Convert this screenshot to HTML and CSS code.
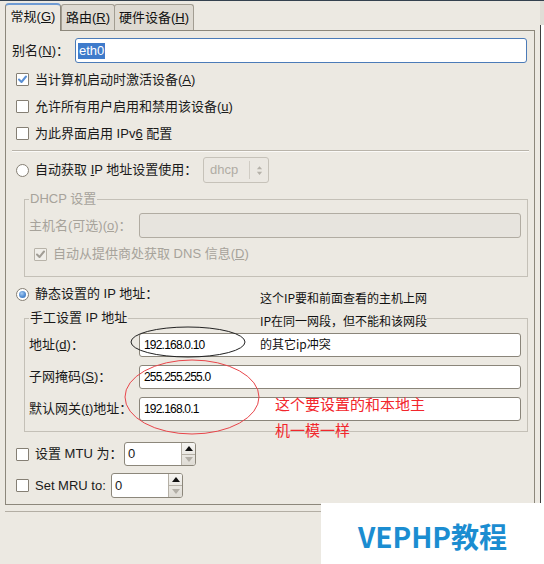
FILE: index.html
```html
<!DOCTYPE html>
<html lang="zh-CN">
<head>
<meta charset="utf-8">
<title>网络设置</title>
<link rel="stylesheet" href="styles.css">
</head>
<body>
<div class="topline"></div>
<div class="win">
  <div class="main">
    <div class="tabs">
      <div class="tab active">常规(<u>G</u>)</div>
      <div class="tab">路由(<u>R</u>)</div>
      <div class="tab last">硬件设备(<u>H</u>)</div>
    </div>
    <div class="frame">
      <div class="alias">
        <span class="alias-lbl">别名(<u>N</u>)：</span>
        <div class="entry focus"><span class="sel">eth0</span></div>
      </div>
      <div class="checks">
        <div class="crow"><span class="cb on"><svg viewBox="0 0 11 11"><path d="M2 5.5 L4.5 8 L9 2.5" /></svg></span><span>当计算机启动时激活设备(<u>A</u>)</span></div>
        <div class="crow"><span class="cb"></span><span>允许所有用户启用和禁用该设备(<u>u</u>)</span></div>
        <div class="crow"><span class="cb"></span><span>为此界面启用 IPv<u>6</u> 配置</span></div>
      </div>
      <div class="hsep"></div>
      <div class="rrow">
        <span class="radio"></span>
        <span class="auto-lbl">自动获取 <u>I</u>P 地址设置使用：</span>
        <div class="combo">
          <span class="combo-txt">dhcp</span>
          <span class="combo-btn"><svg viewBox="0 0 8 12"><path d="M4 1 L7 4.5 L1 4.5 Z M4 11 L7 7.5 L1 7.5 Z"/></svg></span>
        </div>
      </div>
      <fieldset class="grp dhcp">
        <legend>DHCP 设置</legend>
        <div class="frow"><span class="flbl">主机名(可选)(<u>o</u>)：</span><div class="entry dis"></div></div>
        <div class="crow sub"><span class="cb on dis"><svg viewBox="0 0 11 11"><path d="M2 5.5 L4.5 8 L9 2.5" /></svg></span><span>自动从提供商处获取 DNS 信息(<u>D</u>)</span></div>
      </fieldset>
      <div class="rrow static">
        <span class="radio on"></span>
        <span class="static-lbl">静态设置的 IP 地址：</span>
      </div>
      <fieldset class="grp manual">
        <legend>手工设置 IP 地址</legend>
        <div class="frow ip"><span class="flbl">地址(<u>d</u>)：</span><div class="entry val">192.168.0.10</div></div>
        <div class="frow ip"><span class="flbl">子网掩码(<u>S</u>)：</span><div class="entry val">255.255.255.0</div></div>
        <div class="frow ip"><span class="flbl">默认网关(<u>t</u>)地址：</span><div class="entry val">192.168.0.1</div></div>
      </fieldset>
      <div class="mrow mtu">
        <span class="cb"></span>
        <span class="mlbl mtu-lbl">设置 MTU 为：</span>
        <div class="spin">
          <span class="spin-txt">0</span>
          <span class="spin-btns">
            <span class="sb up"><svg viewBox="0 0 8 5"><path d="M4 0 L8 5 L0 5 Z"/></svg></span>
            <span class="sb down"><svg viewBox="0 0 8 5"><path d="M0 0 L8 0 L4 5 Z"/></svg></span>
          </span>
        </div>
      </div>
      <div class="mrow mru">
        <span class="cb"></span>
        <span class="mlbl mru-lbl">Set MRU to:</span>
        <div class="spin">
          <span class="spin-txt">0</span>
          <span class="spin-btns">
            <span class="sb up"><svg viewBox="0 0 8 5"><path d="M4 0 L8 5 L0 5 Z"/></svg></span>
            <span class="sb down"><svg viewBox="0 0 8 5"><path d="M0 0 L8 0 L4 5 Z"/></svg></span>
          </span>
        </div>
      </div>
    </div>
    <div class="bsep"></div>
  </div>
  <div class="redge"><div class="redge-top"></div><div class="redge-body"></div></div>
</div>

<svg class="marks" viewBox="0 0 544 564" width="544" height="564">
  <ellipse cx="188" cy="342" rx="57" ry="15" fill="none" stroke="#222" stroke-width="1"/>
  <ellipse cx="192" cy="397" rx="67" ry="37" fill="none" stroke="#e8454a" stroke-width="1"/>
</svg>

<div class="note black">
  <div>这个IP要和前面查看的主机上网</div>
  <div><span class="cover">IP在同一网段，但不能和该网段</span></div>
  <div>的其它ip冲突</div>
</div>
<div class="note red">
  <div>这个要设置的和本地主</div>
  <div>机一模一样</div>
</div>

<div class="wm">VEPHP教程</div>
</body>
</html>
```

FILE: styles.css
```css
* { box-sizing: border-box; }

html, body {
  margin: 0;
  padding: 0;
}

body {
  width: 544px;
  height: 564px;
  overflow: hidden;
  position: relative;
  background: #ECE9E2;
  color: #1a1a1a;
  font-family: "Liberation Sans", "Noto Sans CJK SC", sans-serif;
  font-size: 13px;
  line-height: 16px;
}

u { text-decoration: underline; text-underline-offset: 1px; }

.topline { height: 1px; background: #34414f; }

.win { display: flex; height: 563px; }
.main { width: 540px; }

/* right window edge */
.redge { width: 4px; display: flex; flex-direction: column; }
.redge-top { height: 24px; background: #e0ddd6; }
.redge-body { flex: 1; background: #fff; border-left: 1px solid #3f3f3f; }

/* tabs */
.tabs {
  height: 29px;
  padding-left: 5px;
  display: flex;
  align-items: flex-end;
}
.tab {
  height: 26px;
  display: flex;
  align-items: center;
  justify-content: center;
  background: #dedad2;
  border: 1px solid #a29d92;
  border-bottom: none;
  border-radius: 3px 3px 0 0;
  color: #111;
}
.tab:nth-child(1) { width: 56px; }
.tab:nth-child(2) { width: 54px; }
.tab:nth-child(3) { width: 80px; margin-left: -1px; }
.tab.active {
  position: relative;
  z-index: 1;
  height: 28px;
  margin-bottom: -1px;
  background: #ECE9E2;
  border-color: #8c877b;
  border-top: 2px solid #6f9bd3;
  border-radius: 4px 4px 0 0;
  padding-bottom: 2px;
}

/* frame */
.frame {
  margin-left: 5px;
  width: 530px;
  height: 475px;
  border: 1px solid #8c877b;
  background: #ECE9E2;
}

.alias {
  margin: 7px 7px 0 6px;
  height: 25px;
  display: flex;
  align-items: center;
}
.alias-lbl { width: 63px; flex: none; }

.entry {
  height: 25px;
  flex: 1;
  background: #fff;
  border: 1px solid #8a857a;
  border-radius: 3px;
  display: flex;
  align-items: center;
  padding-left: 2px;
}
.entry.focus { border-color: #4b7bb8; }
.sel {
  background: #3f7bcb;
  color: #fff;
  padding: 0 1px;
  line-height: 16px;
}
.entry.dis { background: #e7e4de; border-color: #b1aca2; }

.checks { margin-top: 3px; }
.crow {
  height: 27px;
  display: flex;
  align-items: center;
  padding-left: 10px;
  gap: 6px;
}

.cb {
  width: 13px;
  height: 13px;
  flex: none;
  border: 1px solid #857f74;
  background: #fff;
  border-radius: 1px;
  display: flex;
  align-items: center;
  justify-content: center;
}
.cb svg { width: 11px; height: 11px; }
.cb svg path { fill: none; stroke: #5a8fd3; stroke-width: 2; stroke-linecap: round; stroke-linejoin: round; }
.cb.dis { border-color: #b8b3a9; background: #f0eee9; }
.cb.dis svg path { stroke: #a19d95; }

.hsep {
  margin: 3px 5px 0 6px;
  border-top: 1px solid #b9b4aa;
  border-bottom: 1px solid #fbfaf8;
}

.rrow {
  margin-top: 5px;
  height: 26px;
  display: flex;
  align-items: center;
  padding-left: 10px;
}
.rrow.static { margin-top: 4px; }

.radio {
  width: 13px;
  height: 13px;
  flex: none;
  border-radius: 50%;
  border: 1px solid #857f74;
  background: #fff;
  margin-right: 6px;
  display: flex;
  align-items: center;
  justify-content: center;
}
.radio.on::after {
  content: "";
  width: 7px;
  height: 7px;
  border-radius: 50%;
  background: radial-gradient(circle at 40% 35%, #a9cdf3 0, #5f97d8 45%, #2c67b3 100%);
}

.auto-lbl { width: 168px; flex: none; }

.combo {
  width: 66px;
  height: 26px;
  border: 1px solid #c6c2b9;
  border-radius: 3px;
  background: #ebe8e2;
  display: flex;
  align-items: center;
  color: #b0aca4;
}
.combo-txt { flex: 1; padding-left: 6px; }
.combo-btn {
  width: 19px;
  height: 18px;
  border-left: 1px solid #d0ccc4;
  display: flex;
  align-items: center;
  justify-content: center;
}
.combo-btn svg { width: 7px; height: 11px; }
.combo-btn svg path { fill: #b5b1a9; }

/* group boxes */
.grp {
  margin: 0 6px 0 18px;
  border: 1px solid #c4c0b7;
  min-width: 0;
}
.grp legend {
  padding: 0 1px;
  line-height: 16px;
  margin-left: 0;
}
.dhcp {
  margin-top: 8px;
  padding: 6px 6px 10px 4px;
  color: #a7a39b;
}
.manual {
  margin-top: 3px;
  padding: 7px 6px 10px 4px;
}

.frow {
  height: 25px;
  display: flex;
  align-items: center;
}
.flbl { width: 110px; flex: none; }

.crow.sub {
  margin-top: 4px;
  height: 24px;
  padding-left: 5px;
}

.frow.ip { height: 24px; }
.frow.ip + .frow.ip { margin-top: 8px; }
.entry.val {
  height: 24px;
  padding-left: 4px;
  font-size: 12px;
  letter-spacing: -0.8px;
  color: #000;
}

/* MTU / MRU */
.mrow {
  height: 24px;
  display: flex;
  align-items: center;
  padding-left: 10px;
}
.mrow.mtu { margin-top: 10px; }
.mrow.mru { margin-top: 7px; height: 25px; }
.mlbl { margin-left: 6px; flex: none; }
.mtu-lbl { width: 89px; }
.mru-lbl { width: 76px; }

.spin {
  width: 72px;
  height: 24px;
  border: 1px solid #8c877b;
  border-radius: 3px;
  background: #fff;
  display: flex;
  overflow: hidden;
}
.mru .spin { height: 25px; }
.spin-txt { flex: 1; padding-left: 3px; display: flex; align-items: center; }
.spin-btns {
  width: 14px;
  border-left: 1px solid #b5b0a6;
  display: flex;
  flex-direction: column;
  background: linear-gradient(#f6f5f2, #dedbd4);
}
.sb { flex: 1; display: flex; align-items: center; justify-content: center; }
.sb.down { border-top: 1px solid #b5b0a6; }
.sb svg { width: 8px; height: 5px; }
.sb.up svg path { fill: #111; }
.sb.down svg path { fill: #b2aea6; }

.bsep {
  margin: 6px 0 0 5px;
  height: 1px;
  background: #b3aea4;
}

/* annotations drawn over the screenshot */
.marks {
  position: absolute;
  left: 0;
  top: 0;
  pointer-events: none;
}
.note {
  position: absolute;
  font-family: "Noto Sans CJK SC", sans-serif;
  white-space: nowrap;
}
.note.black {
  left: 260px;
  top: 286px;
  font-size: 12px;
  line-height: 23px;
  color: #111;
}
.note .cover { background: #ECE9E2; }
.note.red {
  left: 275px;
  top: 391px;
  font-size: 15px;
  line-height: 26px;
  color: #f2262c;
}

.wm {
  position: absolute;
  left: 321px;
  top: 503px;
  width: 223px;
  height: 61px;
  background: #fff;
  color: #1b8dd1;
  font-family: "Noto Sans CJK SC", sans-serif;
  font-weight: 700;
  font-size: 28px;
  display: flex;
  align-items: center;
  justify-content: center;
  padding-top: 4px;
}
```
